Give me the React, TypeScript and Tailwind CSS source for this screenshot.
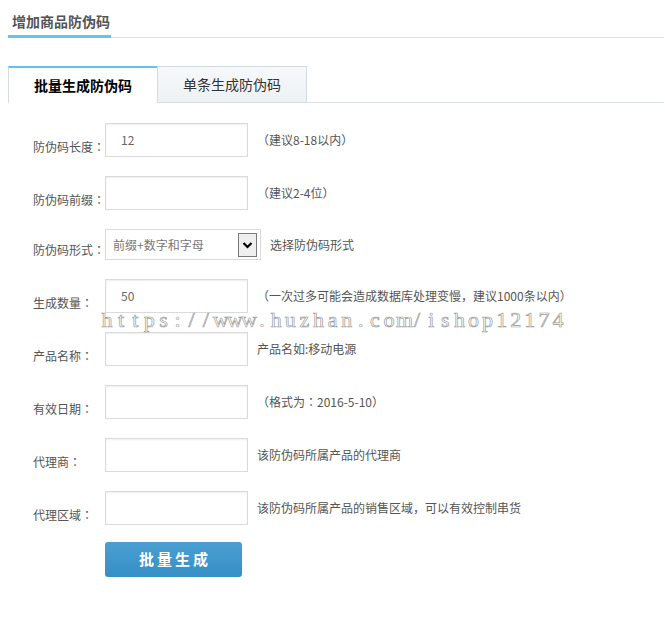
import React from "react";

const labelCls =
  "w-[72px] shrink-0 self-end mb-[2px] text-[12px] leading-[16px] text-[#555] whitespace-nowrap";
const inputCls =
  "w-[143px] h-[34px] shrink-0 border border-[#dadada] bg-white shadow-[inset_0_1px_2px_rgba(0,0,0,0.07)] flex items-center pl-[15px] text-[12px] text-[#666]";
const hintCls = "ml-[9px] text-[12px] leading-[16px] text-[#555] whitespace-nowrap";

const JP = { fontFamily: '"Noto Sans CJK JP", sans-serif' };

function Colon() {
  return <span style={JP}>：</span>;
}

function Label({ text }: { text: string }) {
  return (
    <div className={labelCls}>
      {text}
      <Colon />
    </div>
  );
}

function Row({ label, value, hint }: { label: string; value?: string; hint: React.ReactNode }) {
  return (
    <div className="flex items-center h-[34px]">
      <Label text={label} />
      <div className={inputCls}>{value}</div>
      <div className={hintCls}>{hint}</div>
    </div>
  );
}

const WM = "https://www.huzhan.com/ishop12174";

export default function App() {
  return (
    <div
      className="relative w-[665px] min-h-[643px] bg-white pl-2 pr-px"
      style={{ fontFamily: '"Noto Sans CJK SC", "Noto Sans", sans-serif' }}
    >
      {/* header */}
      <div className="h-[38px] border-b border-[#dae2e8] flex items-end">
        <div className="w-[103px] -mb-px pl-1 pt-[11px] pb-[4px] border-b-[3px] border-[#66c3ee] text-[14px] leading-[20px] font-bold text-[#555] whitespace-nowrap">
          增加商品防伪码
        </div>
      </div>

      {/* tabs */}
      <div className="mt-[28px] flex h-[37px]">
        <div className="w-[149px] border-l border-[#d5dde3] border-t-2 border-t-[#62c2ee] bg-white flex items-center justify-center text-[14px] font-bold text-black">
          批量生成防伪码
        </div>
        <div className="w-[150px] border border-[#d3dce2] bg-gradient-to-b from-[#f6f8fa] to-[#eef2f5] flex items-center justify-center text-[14px] text-[#333]">
          单条生成防伪码
        </div>
        <div className="flex-1 border-b border-[#d6e2e6]" />
      </div>

      {/* form */}
      <div className="mt-[20px] pl-[25px] flex flex-col gap-[19px]">
        <Row label="防伪码长度" value="12" hint="（建议8-18以内）" />
        <Row label="防伪码前缀" hint="（建议2-4位）" />
        <div className="flex items-center h-[31px]">
          <Label text="防伪码形式" />
          <div className="w-[156px] h-[31px] shrink-0 border border-[#dadada] bg-white flex items-center pl-[7px] pr-[3px] text-[12px] text-[#777]">
            <span className="flex-1">前缀+数字和字母</span>
            <div className="w-[19px] h-[24px] border border-[#7a7a7a] bg-[#efefef] flex items-center justify-center">
              <svg width="11" height="8" viewBox="0 0 11 8">
                <path d="M1.5 2 L5.5 6 L9.5 2" fill="none" stroke="#000" strokeWidth="2.2" />
              </svg>
            </div>
          </div>
          <div className={hintCls}>选择防伪码形式</div>
        </div>
        <Row label="生成数量" value="50" hint="（一次过多可能会造成数据库处理变慢，建议1000条以内）" />
        <Row label="产品名称" hint="产品名如:移动电源" />
        <Row
          label="有效日期"
          hint={
            <>
              （格式为<Colon />2016-5-10）
            </>
          }
        />
        <Row label="代理商" hint="该防伪码所属产品的代理商" />
        <Row label="代理区域" hint="该防伪码所属产品的销售区域，可以有效控制串货" />
        <div className="flex -mt-[2px]">
          <div className="w-[72px]" />
          <button className="w-[137px] h-[35px] rounded-[3px] bg-gradient-to-b from-[#4a9fd2] to-[#348fc5] text-white text-[15px] font-bold tracking-[3px] pl-[3px]">
            批量生成
          </button>
        </div>
      </div>

      {/* watermark */}
      <div
        className="absolute left-[100px] top-[308px] pointer-events-none flex text-[22px] leading-[24px] text-white [-webkit-text-stroke:0.7px_#9c9c9c] whitespace-nowrap"
        style={{ fontFamily: '"Liberation Serif", serif' }}
      >
        {WM.split("").map((c, i) => (
          <span key={i} className="w-[14.1px] text-center">
            {c}
          </span>
        ))}
      </div>
    </div>
  );
}
